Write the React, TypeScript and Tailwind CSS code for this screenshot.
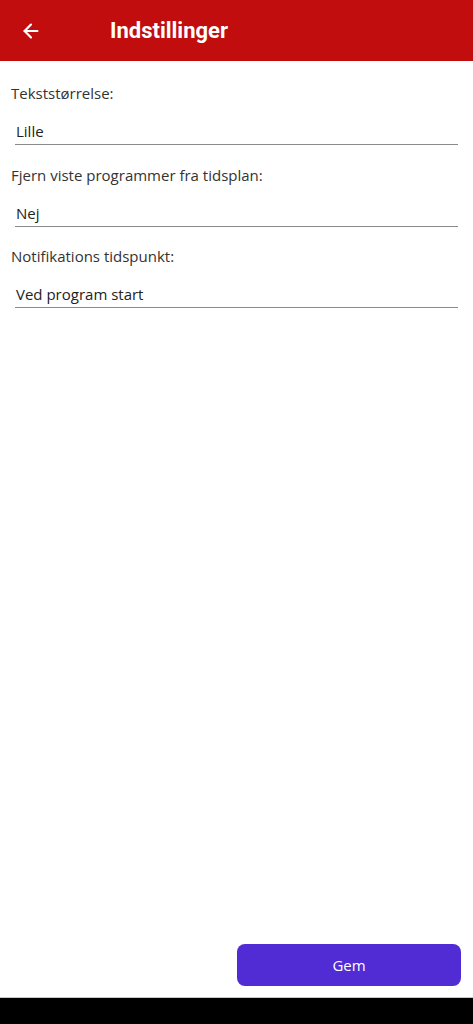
import { ArrowLeft } from "lucide-react";

const settings = [
  { label: "Tekststørrelse:", value: "Lille" },
  { label: "Fjern viste programmer fra tidsplan:", value: "Nej" },
  { label: "Notifikations tidspunkt:", value: "Ved program start" },
];

export default function App() {
  return (
    <div className="flex h-[1024px] w-full flex-col bg-white font-['Open_Sans',sans-serif] text-[#222]">
      <header className="flex h-[61px] shrink-0 items-center bg-[#c10d0d] text-white">
        <button className="ml-[19px] flex h-[24px] w-[24px] items-center justify-center">
          <ArrowLeft className="h-[22px] w-[22px]" strokeWidth={2.4} />
        </button>
        <h1 className="ml-[67px] font-['Roboto',sans-serif] text-[22px] font-bold leading-none">
          Indstillinger
        </h1>
      </header>

      <main className="flex flex-1 flex-col px-[11px] pt-[21px]">
        {settings.map((s) => (
          <div key={s.label} className="mb-[18.5px] flex flex-col">
            <div className="text-[15px] leading-[22px] text-[#333]">{s.label}</div>
            <div className="mt-[16px] ml-[4px] mr-[4px] border-b border-[#8a8a8a] pb-[2px] pl-[1px] text-[15px] leading-[22px] text-[#222]">
              {s.value}
            </div>
          </div>
        ))}
      </main>

      <div className="flex justify-end px-[12px] pb-[11px]">
        <button className="h-[42px] w-[224px] rounded-[8px] bg-[#512bd4] text-[15px] text-white">
          Gem
        </button>
      </div>
      <div className="h-[27px] shrink-0 border-t border-[#c8c8c8] bg-black" />
    </div>
  );
}
